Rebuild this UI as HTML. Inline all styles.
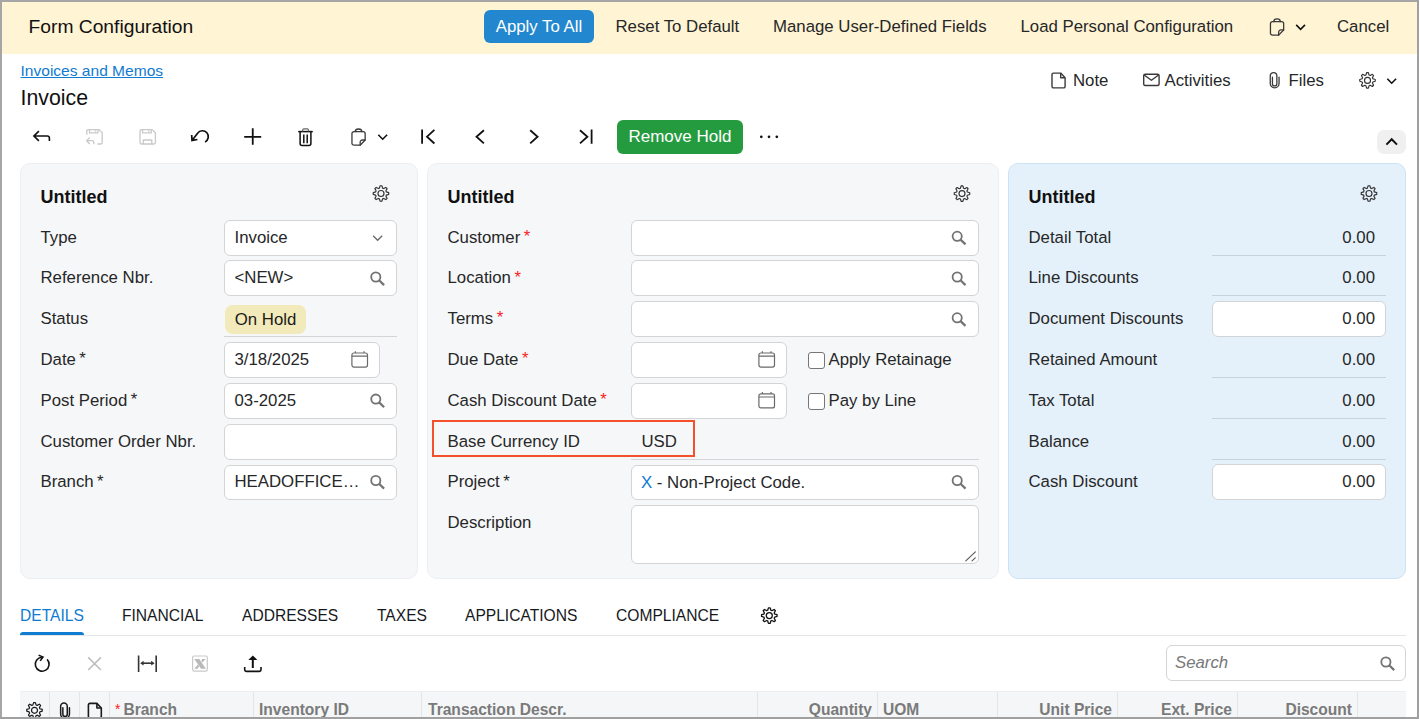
<!DOCTYPE html>
<html lang="en">
<head>
<meta charset="utf-8">
<title>Invoice - Form Configuration</title>
<style>
*{box-sizing:border-box;margin:0;padding:0}
html,body{width:1420px;height:719px;overflow:hidden;background:#fff}
body{position:relative;font-family:"Liberation Sans",Arial,sans-serif;font-size:16.8px;color:#262728;line-height:20px}
.abs,.t,.box,.line,.ico{position:absolute}
.t{white-space:nowrap;line-height:20px;height:20px}
.frame-l{left:0;top:0;width:2px;height:719px;background:#a6a6a6}
.frame-t{left:0;top:0;width:1419px;height:2px;background:#a6a6a6}
.frame-r{left:1417px;top:0;width:2px;height:719px;background:#a0a0a0}
.frame-b{left:0;top:717px;width:1419px;height:2px;background:#a0a0a0}
.cfgbar{left:2px;top:2px;width:1415px;height:52px;background:#fff4d4}
.cfgtitle{left:28.5px;top:16.8px;font-size:19.25px;color:#111}
.btn-blue{left:484px;top:10px;width:110px;height:32.5px;border-radius:6px;background:#2287ce;color:#fff;text-align:center;line-height:33.5px;font-size:16.8px;white-space:nowrap}
.link{color:#0f7bd1;text-decoration:underline;font-size:15.56px}
.h1{font-size:21.3px;color:#111;line-height:26px;height:26px}
.btn-green{left:617px;top:120px;width:126px;height:34px;border-radius:6px;background:#259b40;color:#fff;text-align:center;line-height:33.4px;font-size:17.05px;white-space:nowrap}
.panel{position:absolute;top:163px;height:416px;border-radius:10px;background:#f6f7f9;border:1px solid #eceef1}
.panel.blue{background:#e5f1fa;border-color:#cde3f5}
.cap{font-weight:bold;font-size:18px;color:#111}
.box{background:#fff;border:1px solid #d2d4d6;border-radius:6px;height:35.3px}
.line{height:1px;background:#d3d6d9}
.line.b{background:#c6d3dc}
.r{text-align:right}
.badge{left:225px;top:305px;width:81px;height:29px;border-radius:7.5px;background:#f3eabb;text-align:center;line-height:30.6px;color:#1a1a1a}
.ast{margin-left:3.4px;position:relative;top:-0.5px}
.req{color:#f81d22;margin-left:3.6px;position:relative;top:-0.7px}
.cb{position:absolute;width:16.5px;height:16.5px;border:1.3px solid #767676;border-radius:3px;background:#fff}
.tab{font-size:16.5px;color:#16191c;transform:scaleX(0.945);transform-origin:0 50%}
.gridhdr{left:20px;top:691px;width:1386px;height:26px;background:#f5f6f8;border-top:1px solid #eceef0}
.vsep{position:absolute;top:692px;width:1px;height:25px;background:#e3e5e8}
.gh{font-weight:bold;font-size:16.4px;color:#7a7a7a;transform:scaleX(0.95);transform-origin:0 50%}
.gh.r{transform-origin:100% 50%}
svg{position:absolute;overflow:visible}
</style>
</head>
<body>
<!-- config bar -->
<div class="abs cfgbar"></div>
<div class="t cfgtitle">Form Configuration</div>
<div class="abs btn-blue">Apply To All</div>
<div class="t" style="left:615.5px;top:17px">Reset To Default</div>
<div class="t" style="left:773px;top:17px">Manage User-Defined Fields</div>
<div class="t" style="left:1020.5px;top:17px">Load Personal Configuration</div>
<div class="t" style="left:1337px;top:17px">Cancel</div>

<!-- title -->
<div class="t link" style="left:20.5px;top:60.8px">Invoices and Memos</div>
<div class="t h1" style="left:20.5px;top:85px">Invoice</div>
<div class="t" style="left:1073px;top:70.8px">Note</div>
<div class="t" style="left:1164.5px;top:70.8px">Activities</div>
<div class="t" style="left:1288.5px;top:70.8px">Files</div>

<!-- toolbar -->
<div class="abs btn-green">Remove Hold</div>
<div class="abs" style="left:1377px;top:130px;width:29px;height:24px;border-radius:7px;background:#f0f0f0"></div>

<!-- panels -->
<div class="panel" style="left:20px;width:398px"></div>
<div class="panel" style="left:427px;width:572px"></div>
<div class="panel blue" style="left:1008px;width:398px"></div>

<!-- panel 1 -->
<div class="t cap" style="left:40.5px;top:186.5px">Untitled</div>
<div class="t" style="left:40.5px;top:227.5px">Type</div>
<div class="t" style="left:40.5px;top:268.2px">Reference Nbr.</div>
<div class="t" style="left:40.5px;top:309px">Status</div>
<div class="t" style="left:40.5px;top:349.7px">Date<span class="ast">*</span></div>
<div class="t" style="left:40.5px;top:390.5px">Post Period<span class="ast">*</span></div>
<div class="t" style="left:40.5px;top:432px">Customer Order Nbr.</div>
<div class="t" style="left:40.5px;top:472px">Branch<span class="ast">*</span></div>
<div class="box" style="left:224px;top:220.3px;width:173px"></div>
<div class="box" style="left:224px;top:260.4px;width:173px"></div>
<div class="abs badge">On Hold</div>
<div class="line" style="left:224px;top:336px;width:173px"></div>
<div class="box" style="left:224px;top:342.4px;width:156px"></div>
<div class="box" style="left:224px;top:383.4px;width:173px"></div>
<div class="box" style="left:224px;top:424px;width:173px;height:36px"></div>
<div class="box" style="left:224px;top:464.7px;width:173px"></div>
<div class="t" style="left:234.5px;top:227.5px">Invoice</div>
<div class="t" style="left:234.5px;top:268.2px">&lt;NEW&gt;</div>
<div class="t" style="left:234.5px;top:350px">3/18/2025</div>
<div class="t" style="left:234.5px;top:390.5px">03-2025</div>
<div class="t" style="left:234.5px;top:472px">HEADOFFICE…</div>

<!-- panel 2 -->
<div class="t cap" style="left:447.5px;top:186.5px">Untitled</div>
<div class="t" style="left:447.5px;top:227.5px">Customer<span class="req">*</span></div>
<div class="t" style="left:447.5px;top:268.2px">Location<span class="req">*</span></div>
<div class="t" style="left:447.5px;top:309px">Terms<span class="req">*</span></div>
<div class="t" style="left:447.5px;top:349.7px">Due Date<span class="req">*</span></div>
<div class="t" style="left:447.5px;top:390.5px">Cash Discount Date<span class="req">*</span></div>
<div class="t" style="left:447.5px;top:432px">Base Currency ID</div>
<div class="t" style="left:447.5px;top:472px">Project<span class="ast">*</span></div>
<div class="t" style="left:447.5px;top:512.7px">Description</div>
<div class="box" style="left:631px;top:220.3px;width:348px"></div>
<div class="box" style="left:631px;top:260.4px;width:348px"></div>
<div class="box" style="left:631px;top:301.4px;width:348px"></div>
<div class="box" style="left:631px;top:342.4px;width:156px"></div>
<div class="box" style="left:631px;top:383.3px;width:156px"></div>
<div class="cb" style="left:808px;top:352px"></div>
<div class="cb" style="left:808px;top:393px"></div>
<div class="t" style="left:828.5px;top:350px">Apply Retainage</div>
<div class="t" style="left:828.5px;top:390.5px">Pay by Line</div>
<div class="t" style="left:641.5px;top:432px">USD</div>
<div class="abs" style="left:432px;top:420px;width:263px;height:36.6px;border:2px solid #f3502b"></div>
<div class="line" style="left:631px;top:459px;width:348px"></div>
<div class="box" style="left:631px;top:464.7px;width:348px"></div>
<div class="t" style="left:641px;top:473px"><span style="color:#0f7bd1">X</span> - Non-Project Code.</div>
<div class="box" style="left:631px;top:505.4px;width:348px;height:58.5px"></div>

<!-- panel 3 -->
<div class="t cap" style="left:1028.5px;top:186.5px">Untitled</div>
<div class="t" style="left:1028.5px;top:227.5px">Detail Total</div>
<div class="t" style="left:1028.5px;top:268.2px">Line Discounts</div>
<div class="t" style="left:1028.5px;top:309px">Document Discounts</div>
<div class="t" style="left:1028.5px;top:349.7px">Retained Amount</div>
<div class="t" style="left:1028.5px;top:390.5px">Tax Total</div>
<div class="t" style="left:1028.5px;top:432px">Balance</div>
<div class="t" style="left:1028.5px;top:472px">Cash Discount</div>
<div class="box" style="left:1212px;top:301.3px;width:174px"></div>
<div class="box" style="left:1212px;top:464.3px;width:174px"></div>
<div class="line b" style="left:1212px;top:255px;width:174px"></div>
<div class="line b" style="left:1212px;top:295px;width:174px"></div>
<div class="line b" style="left:1212px;top:377px;width:174px"></div>
<div class="line b" style="left:1212px;top:418px;width:174px"></div>
<div class="line b" style="left:1212px;top:459px;width:174px"></div>
<div class="t r" style="left:1275px;width:100px;top:227.5px">0.00</div>
<div class="t r" style="left:1275px;width:100px;top:268.2px">0.00</div>
<div class="t r" style="left:1275px;width:100px;top:309px">0.00</div>
<div class="t r" style="left:1275px;width:100px;top:349.7px">0.00</div>
<div class="t r" style="left:1275px;width:100px;top:390.5px">0.00</div>
<div class="t r" style="left:1275px;width:100px;top:432px">0.00</div>
<div class="t r" style="left:1275px;width:100px;top:472px">0.00</div>

<!-- tabs -->
<div class="t tab" style="left:19.6px;top:605.2px;color:#0f7bd1">DETAILS</div>
<div class="t tab" style="left:122.1px;top:605.2px">FINANCIAL</div>
<div class="t tab" style="left:241.5px;top:605.2px">ADDRESSES</div>
<div class="t tab" style="left:377px;top:605.2px">TAXES</div>
<div class="t tab" style="left:465px;top:605.2px">APPLICATIONS</div>
<div class="t tab" style="left:616px;top:605.2px">COMPLIANCE</div>
<div class="line" style="left:20px;top:634.5px;width:1386px;background:#e3e5e8"></div>
<div class="abs" style="left:20px;top:631.5px;width:63.5px;height:3.5px;background:#0f7bd1;border-radius:3px 3px 0 0"></div>

<!-- grid toolbar / search -->
<div class="box" style="left:1166px;top:645px;width:240px;height:35.5px"></div>
<div class="t" style="left:1175px;top:652.5px;font-style:italic;color:#787878">Search</div>

<!-- grid header -->
<div class="abs gridhdr"></div>
<div class="vsep" style="left:49px"></div><div class="vsep" style="left:79px"></div><div class="vsep" style="left:109px"></div>
<div class="vsep" style="left:253px"></div><div class="vsep" style="left:421px"></div><div class="vsep" style="left:757px"></div>
<div class="vsep" style="left:877px"></div><div class="vsep" style="left:997px"></div><div class="vsep" style="left:1117px"></div>
<div class="vsep" style="left:1237px"></div><div class="vsep" style="left:1357px"></div>
<div class="t gh" style="left:114.6px;top:698.8px"><span class="req" style="font-weight:normal;margin-left:0;top:-0.6px;font-size:14.5px">*</span><span style="margin-left:3.2px">Branch</span></div>
<div class="t gh" style="left:259px;top:698.8px">Inventory ID</div>
<div class="t gh" style="left:427.5px;top:698.8px">Transaction Descr.</div>
<div class="t gh r" style="left:771.5px;width:100px;top:698.8px">Quantity</div>
<div class="t gh" style="left:883px;top:698.8px">UOM</div>
<div class="t gh r" style="left:1011.5px;width:100px;top:698.8px">Unit Price</div>
<div class="t gh r" style="left:1131.5px;width:100px;top:698.8px">Ext. Price</div>
<div class="t gh r" style="left:1251.5px;width:100px;top:698.8px">Discount</div>

<!-- ICONS -->
<svg width="1420" height="719" viewBox="0 0 1420 719" style="left:0;top:0;pointer-events:none">
<g transform="translate(1270.45,21.65)" fill="none" stroke="#3a3a3a" stroke-width="1.3" stroke-linejoin="round" stroke-linecap="round"><path d="M8.20,13.50 H2 A2,2 0 0 1 0,11.50 V2 A2,2 0 0 1 2,0 H11.20 A2,2 0 0 1 13.20,2 V8.30 Z"/><path d="M8.20,13.50 V10.50 A2.2,2.2 0 0 1 10.40,8.30 H13.20"/><path d="M3.30,0 A3.3,2.7 0 0 1 9.90,0"/></g>
<path d="M1296.20,24.90 L1300.60,29.30 L1305.00,24.90" fill="none" stroke="#111" stroke-width="1.6"/>
<g transform="translate(1052.00,73.10)" fill="none" stroke="#3a3a3a" stroke-width="1.4" stroke-linejoin="round"><path d="M1.5,0 H8.70 L13.10,4.6 V13.30 A1.5,1.5 0 0 1 11.60,14.80 H1.5 A1.5,1.5 0 0 1 0,13.30 V1.5 A1.5,1.5 0 0 1 1.5,0 Z"/><path d="M8.70,0 V4.6 H13.10"/></g>
<g fill="none" stroke="#3a3a3a" stroke-width="1.4" stroke-linejoin="round"><rect x="1143.7" y="74.3" width="15.4" height="11.2" rx="1.5"/><path d="M1144.2,75.0 L1151.4,80.3 L1158.6,75.0"/></g>
<g transform="translate(1270.25,72.55)" fill="none" stroke="#3a3a3a" stroke-width="1.3" stroke-linecap="round"><path d="M8.8,4.6 V11.0 A4.4,4.4 0 0 1 0,11.0 V3.3 A3.3,3.3 0 0 1 6.6,3.3 V11.2 A2.2,2.2 0 0 1 2.2,11.2 V4.6"/></g>
<g transform="translate(1367.5,80.4) scale(1.0)" fill="none" stroke="#333" stroke-width="1.15" stroke-linejoin="round"><path d="M-1.59,-5.37 L-0.88,-7.75 L0.88,-7.75 L1.59,-5.37 L2.67,-4.92 L4.86,-6.10 L6.10,-4.86 L4.92,-2.67 L5.37,-1.59 L7.75,-0.88 L7.75,0.88 L5.37,1.59 L4.92,2.67 L6.10,4.86 L4.86,6.10 L2.67,4.92 L1.59,5.37 L0.88,7.75 L-0.88,7.75 L-1.59,5.37 L-2.67,4.92 L-4.86,6.10 L-6.10,4.86 L-4.92,2.67 L-5.37,1.59 L-7.75,0.88 L-7.75,-0.88 L-5.37,-1.59 L-4.92,-2.67 L-6.10,-4.86 L-4.86,-6.10 L-2.67,-4.92Z"/><circle r="3.0"/></g>
<path d="M1387.30,78.80 L1391.70,83.20 L1396.10,78.80" fill="none" stroke="#111" stroke-width="1.6"/>
<path d="M1386.4,144.6 L1391.7,139.2 L1397,144.6" fill="none" stroke="#111" stroke-width="2"/>
<path d="M38.9,131.2 L33.9,136.0 L38.9,140.8 M34.1,136.0 H47.2 A2.2,2.2 0 0 1 49.4,138.2 V141.0" fill="none" stroke="#111" stroke-width="1.6"/>
<g fill="none" stroke="#c9c9c9" stroke-width="1.3" stroke-linejoin="round"><path d="M86.8,134.8 V131.0 A1.4,1.4 0 0 1 88.2,129.6 H99.0 L102.2,132.7 V142.6 A1.4,1.4 0 0 1 100.8,144.0 H97.4"/><path d="M89.5,129.6 V132.9 H98.0 V129.6 M95.5,130.3 V131.7"/><path d="M89.8,137.4 L86.6,140.7 L89.8,144.0 M86.8,140.7 H92.0 A1.8,1.8 0 0 1 93.8,142.5 V144.2"/></g>
<g fill="none" stroke="#c9c9c9" stroke-width="1.3" stroke-linejoin="round"><path d="M141.4,129.6 H152.2 L155.4,132.7 V142.6 A1.4,1.4 0 0 1 154.0,144.0 H141.4 A1.4,1.4 0 0 1 140.0,142.6 V131.0 A1.4,1.4 0 0 1 141.4,129.6 Z"/><path d="M142.5,129.6 V132.9 H151.2 V129.6 M148.7,130.3 V131.7"/><path d="M143.3,144.0 V140.0 H151.8 V144.0"/></g>
<path d="M191.7,135.0 L192.0,140.4 L197.4,139.5 M192.2,140.2 L197.6,133.2 A5.9,5.9 0 1 1 205.05,141.9" fill="none" stroke="#111" stroke-width="1.7"/>
<path d="M244.2,136.8 H261.2 M252.75,128.3 V144.8" fill="none" stroke="#111" stroke-width="1.8"/>
<g fill="none" stroke="#111" stroke-width="1.5"><path d="M298.2,131.6 H312.8"/><path d="M300.1,131.6 V143.6 A2,2 0 0 0 302.1,145.6 H308.9 A2,2 0 0 0 310.9,143.6 V131.6"/><path d="M303.8,134.6 V143.2 M307.2,134.6 V143.2"/><path d="M302.6,131.4 V130.2 A1.4,1.4 0 0 1 304,128.8 H307.1 A1.4,1.4 0 0 1 308.5,130.2 V131.4" stroke="#666" stroke-width="1.2"/></g>
<g transform="translate(351.95,131.70)" fill="none" stroke="#3a3a3a" stroke-width="1.3" stroke-linejoin="round" stroke-linecap="round"><path d="M8.20,13.50 H2 A2,2 0 0 1 0,11.50 V2 A2,2 0 0 1 2,0 H11.20 A2,2 0 0 1 13.20,2 V8.30 Z"/><path d="M8.20,13.50 V10.50 A2.2,2.2 0 0 1 10.40,8.30 H13.20"/><path d="M3.30,0 A3.3,2.7 0 0 1 9.90,0"/></g>
<path d="M378.30,134.80 L382.70,139.20 L387.10,134.80" fill="none" stroke="#111" stroke-width="1.6"/>
<path d="M422.1,129.6 V143.8 M434.4,129.9 L427,136.7 L434.4,143.5" fill="none" stroke="#111" stroke-width="1.8"/>
<path d="M483.9,130.2 L476.5,136.7 L483.9,143.3" fill="none" stroke="#111" stroke-width="1.8"/>
<path d="M530.2,130.2 L537.6,136.7 L530.2,143.3" fill="none" stroke="#111" stroke-width="1.8"/>
<path d="M580,130.2 L587.4,136.7 L580,143.3 M591.6,129.6 V143.8" fill="none" stroke="#111" stroke-width="1.8"/>
<circle cx="761.3" cy="136.8" r="1.35" fill="#111"/>
<circle cx="769.0" cy="136.8" r="1.35" fill="#111"/>
<circle cx="776.8" cy="136.8" r="1.35" fill="#111"/>
<g transform="translate(381,193.5) scale(1.0)" fill="none" stroke="#333" stroke-width="1.15" stroke-linejoin="round"><path d="M-1.59,-5.37 L-0.88,-7.75 L0.88,-7.75 L1.59,-5.37 L2.67,-4.92 L4.86,-6.10 L6.10,-4.86 L4.92,-2.67 L5.37,-1.59 L7.75,-0.88 L7.75,0.88 L5.37,1.59 L4.92,2.67 L6.10,4.86 L4.86,6.10 L2.67,4.92 L1.59,5.37 L0.88,7.75 L-0.88,7.75 L-1.59,5.37 L-2.67,4.92 L-4.86,6.10 L-6.10,4.86 L-4.92,2.67 L-5.37,1.59 L-7.75,0.88 L-7.75,-0.88 L-5.37,-1.59 L-4.92,-2.67 L-6.10,-4.86 L-4.86,-6.10 L-2.67,-4.92Z"/><circle r="3.0"/></g>
<g transform="translate(962,193.6) scale(1.0)" fill="none" stroke="#333" stroke-width="1.15" stroke-linejoin="round"><path d="M-1.59,-5.37 L-0.88,-7.75 L0.88,-7.75 L1.59,-5.37 L2.67,-4.92 L4.86,-6.10 L6.10,-4.86 L4.92,-2.67 L5.37,-1.59 L7.75,-0.88 L7.75,0.88 L5.37,1.59 L4.92,2.67 L6.10,4.86 L4.86,6.10 L2.67,4.92 L1.59,5.37 L0.88,7.75 L-0.88,7.75 L-1.59,5.37 L-2.67,4.92 L-4.86,6.10 L-6.10,4.86 L-4.92,2.67 L-5.37,1.59 L-7.75,0.88 L-7.75,-0.88 L-5.37,-1.59 L-4.92,-2.67 L-6.10,-4.86 L-4.86,-6.10 L-2.67,-4.92Z"/><circle r="3.0"/></g>
<g transform="translate(1369,193.5) scale(1.0)" fill="none" stroke="#333" stroke-width="1.15" stroke-linejoin="round"><path d="M-1.59,-5.37 L-0.88,-7.75 L0.88,-7.75 L1.59,-5.37 L2.67,-4.92 L4.86,-6.10 L6.10,-4.86 L4.92,-2.67 L5.37,-1.59 L7.75,-0.88 L7.75,0.88 L5.37,1.59 L4.92,2.67 L6.10,4.86 L4.86,6.10 L2.67,4.92 L1.59,5.37 L0.88,7.75 L-0.88,7.75 L-1.59,5.37 L-2.67,4.92 L-4.86,6.10 L-6.10,4.86 L-4.92,2.67 L-5.37,1.59 L-7.75,0.88 L-7.75,-0.88 L-5.37,-1.59 L-4.92,-2.67 L-6.10,-4.86 L-4.86,-6.10 L-2.67,-4.92Z"/><circle r="3.0"/></g>
<path d="M373.1,235.7 L377.65,240.3 L382.2,235.7" fill="none" stroke="#6a6a6a" stroke-width="1.3"/>
<g fill="none" stroke="#737373"><circle cx="375.8" cy="277.0" r="4.6" stroke-width="1.8"/><path d="M379.10,280.30 L384.10,285.10" stroke-width="2.2"/></g>
<g transform="translate(351.90,353.00)" fill="none" stroke="#6a6a6a" stroke-width="1.2"><rect x="0" y="0" width="15.60" height="14.10" rx="2"/><path d="M0,3.2 H15.60 M3.5,0 V-1.8 M12.10,0 V-1.8"/></g>
<g fill="none" stroke="#737373"><circle cx="375.8" cy="399.1" r="4.6" stroke-width="1.8"/><path d="M379.10,402.40 L384.10,407.20" stroke-width="2.2"/></g>
<g fill="none" stroke="#737373"><circle cx="375.8" cy="480.5" r="4.6" stroke-width="1.8"/><path d="M379.10,483.80 L384.10,488.60" stroke-width="2.2"/></g>
<g fill="none" stroke="#737373"><circle cx="957.2" cy="236.3" r="4.6" stroke-width="1.8"/><path d="M960.50,239.60 L965.50,244.40" stroke-width="2.2"/></g>
<g fill="none" stroke="#737373"><circle cx="957.2" cy="277.0" r="4.6" stroke-width="1.8"/><path d="M960.50,280.30 L965.50,285.10" stroke-width="2.2"/></g>
<g fill="none" stroke="#737373"><circle cx="957.2" cy="317.8" r="4.6" stroke-width="1.8"/><path d="M960.50,321.10 L965.50,325.90" stroke-width="2.2"/></g>
<g fill="none" stroke="#737373"><circle cx="957.2" cy="480.5" r="4.6" stroke-width="1.8"/><path d="M960.50,483.80 L965.50,488.60" stroke-width="2.2"/></g>
<g transform="translate(758.90,353.00)" fill="none" stroke="#6a6a6a" stroke-width="1.2"><rect x="0" y="0" width="15.60" height="14.10" rx="2"/><path d="M0,3.2 H15.60 M3.5,0 V-1.8 M12.10,0 V-1.8"/></g>
<g transform="translate(758.90,393.80)" fill="none" stroke="#6a6a6a" stroke-width="1.2"><rect x="0" y="0" width="15.60" height="14.10" rx="2"/><path d="M0,3.2 H15.60 M3.5,0 V-1.8 M12.10,0 V-1.8"/></g>
<path d="M965.8,560.9 L975.4,551.8 M972,560.9 L975.3,557.9" fill="none" stroke="#555" stroke-width="1.1" stroke-linecap="round"/>
<g transform="translate(769.3,615.6) scale(1.0)" fill="none" stroke="#111" stroke-width="1.3" stroke-linejoin="round"><path d="M-1.59,-5.37 L-0.88,-7.75 L0.88,-7.75 L1.59,-5.37 L2.67,-4.92 L4.86,-6.10 L6.10,-4.86 L4.92,-2.67 L5.37,-1.59 L7.75,-0.88 L7.75,0.88 L5.37,1.59 L4.92,2.67 L6.10,4.86 L4.86,6.10 L2.67,4.92 L1.59,5.37 L0.88,7.75 L-0.88,7.75 L-1.59,5.37 L-2.67,4.92 L-4.86,6.10 L-6.10,4.86 L-4.92,2.67 L-5.37,1.59 L-7.75,0.88 L-7.75,-0.88 L-5.37,-1.59 L-4.92,-2.67 L-6.10,-4.86 L-4.86,-6.10 L-2.67,-4.92Z"/><circle r="3.0"/></g>
<path d="M47.1,659.4 A6.9,6.9 0 1 1 41.8,657.35 M38.6,655.1 L43.0,657.0 L40.2,660.9" fill="none" stroke="#111" stroke-width="1.55"/>
<path d="M88.2,657.4 L100.9,670 M100.9,657.4 L88.2,670" fill="none" stroke="#bfbfbf" stroke-width="1.7"/>
<g stroke="#333" fill="none"><path d="M138.6,655.4 V671.9 M156.2,655.4 V671.9" stroke-width="1.6"/><path d="M142,663.2 H152.8" stroke-width="1.6"/><path d="M140.2,663.2 L143.6,660.8 V665.6 Z M154.6,663.2 L151.2,660.8 V665.6 Z" fill="#333" stroke="none"/></g>
<g><rect x="192.6" y="656.0" width="14.7" height="15.2" rx="1.6" fill="none" stroke="#c9c9c9" stroke-width="1.2"/><path d="M194.3,658.9 H199.2 L205.9,668.7 H201.0 Z" fill="#b9b9b9"/><path d="M202.3,658.9 H205.7 L202.4,662.6 L201.2,660.9 Z M194.3,668.7 L197.9,664.5 L199.1,666.2 L197.6,668.7 Z" fill="#b9b9b9"/></g>
<g fill="none" stroke="#111"><path d="M252.8,658.5 V668" stroke-width="2"/><path d="M252.8,655.4 L257.3,659.9 H248.3 Z" fill="#111" stroke="none"/><path d="M244.7,667 V669.8 A1.6,1.6 0 0 0 246.3,671.4 H259.4 A1.6,1.6 0 0 0 261,669.8 V667" stroke-width="1.6"/></g>
<g fill="none" stroke="#737373"><circle cx="1385.9" cy="662.0" r="4.6" stroke-width="1.8"/><path d="M1389.20,665.30 L1394.20,670.10" stroke-width="2.2"/></g>
<g transform="translate(34.5,710.3) scale(1.0)" fill="none" stroke="#1a1a1a" stroke-width="1.2" stroke-linejoin="round"><path d="M-1.59,-5.37 L-0.88,-7.75 L0.88,-7.75 L1.59,-5.37 L2.67,-4.92 L4.86,-6.10 L6.10,-4.86 L4.92,-2.67 L5.37,-1.59 L7.75,-0.88 L7.75,0.88 L5.37,1.59 L4.92,2.67 L6.10,4.86 L4.86,6.10 L2.67,4.92 L1.59,5.37 L0.88,7.75 L-0.88,7.75 L-1.59,5.37 L-2.67,4.92 L-4.86,6.10 L-6.10,4.86 L-4.92,2.67 L-5.37,1.59 L-7.75,0.88 L-7.75,-0.88 L-5.37,-1.59 L-4.92,-2.67 L-6.10,-4.86 L-4.86,-6.10 L-2.67,-4.92Z"/><circle r="3.0"/></g>
<g transform="translate(60.65,703.05)" fill="none" stroke="#1a1a1a" stroke-width="1.5" stroke-linecap="round"><path d="M8.8,4.6 V11.0 A4.4,4.4 0 0 1 0,11.0 V3.3 A3.3,3.3 0 0 1 6.6,3.3 V11.2 A2.2,2.2 0 0 1 2.2,11.2 V4.6"/></g>
<g transform="translate(88.40,703.40)" fill="none" stroke="#1a1a1a" stroke-width="1.6" stroke-linejoin="round"><path d="M1.5,0 H8.50 L12.90,4.6 V13.10 A1.5,1.5 0 0 1 11.40,14.60 H1.5 A1.5,1.5 0 0 1 0,13.10 V1.5 A1.5,1.5 0 0 1 1.5,0 Z"/><path d="M8.50,0 V4.6 H12.90"/></g>
</svg>
<!-- /ICONS -->

<!-- frame -->
<div class="abs frame-l"></div><div class="abs frame-t"></div><div class="abs frame-r"></div><div class="abs frame-b"></div>
</body>
</html>
